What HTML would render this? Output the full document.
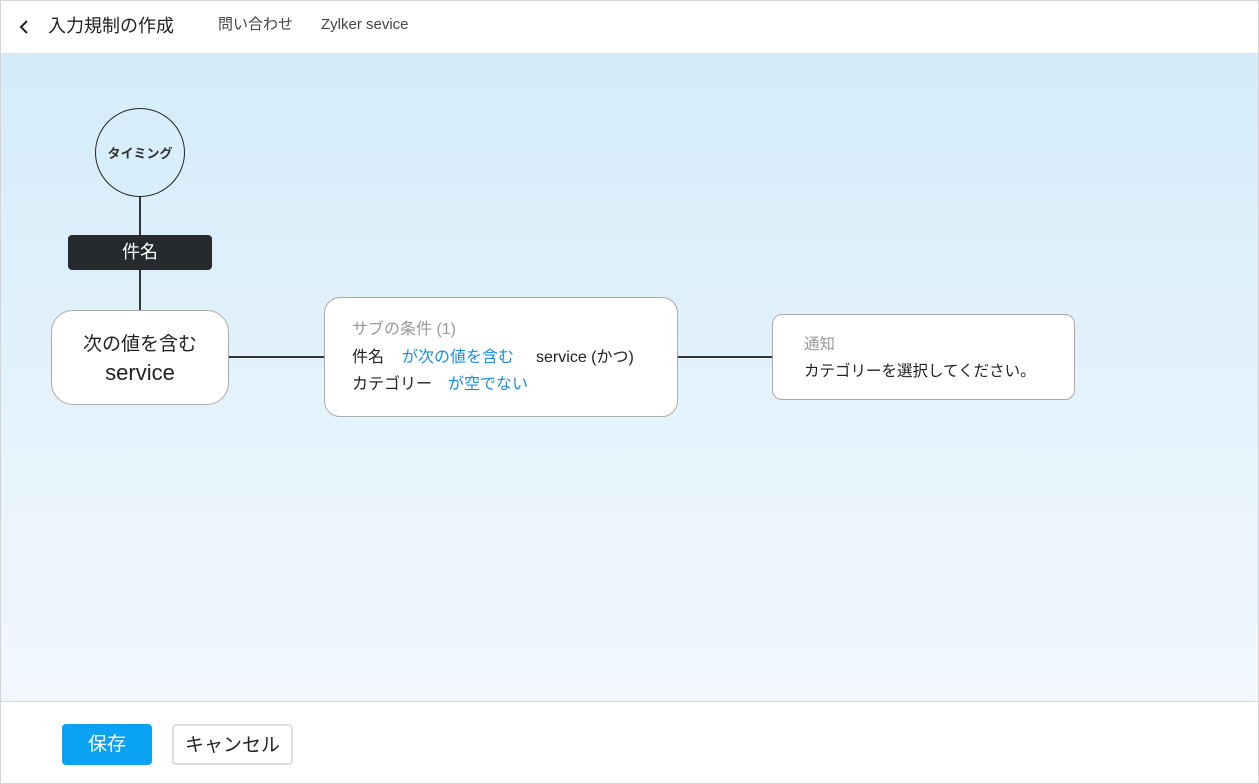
<!DOCTYPE html>
<html><head><meta charset="utf-8"><style>
*{box-sizing:border-box;margin:0;padding:0}
body{width:1259px;height:784px;position:relative;overflow:hidden;font-family:"Liberation Sans","Noto Sans CJK JP",sans-serif;background:#fff;color:#222}
.frame{position:absolute;left:0;top:0;width:1259px;height:784px;border:1px solid #d4d4d4}
.hdr{position:absolute;left:1px;top:1px;width:1257px;height:52px;background:#fff}
.canvas{position:absolute;left:1px;top:53px;width:1257px;height:648px;background:linear-gradient(#d4ecfa,#f2f8fd)}
.foot{position:absolute;left:1px;top:701px;width:1257px;height:82px;background:#fff;border-top:1px solid #d8d8d8}
.abs{position:absolute}
.line{position:absolute;background:#333}
</style></head><body>
<div class="hdr">
<svg class="abs" style="left:17px;top:18px" width="12" height="16" viewBox="0 0 12 16"><path d="M9 2 L3 8 L9 14" fill="none" stroke="#222" stroke-width="2"/></svg>
<div class="abs" style="left:47px;top:12px;font-size:18px;line-height:26px;color:#222">入力規制の作成</div>
<div class="abs" style="left:217px;top:13px;font-size:15px;line-height:22px;color:#444">問い合わせ</div>
<div class="abs" style="left:320px;top:13px;font-size:15px;line-height:22px;height:22px;color:#444;display:flex;align-items:center">Zylker sevice</div>
</div>
<div class="canvas"></div>
<div class="line" style="left:139px;top:196px;width:1.5px;height:40px"></div>
<div class="line" style="left:139px;top:269px;width:1.5px;height:42px"></div>
<div class="line" style="left:228px;top:356px;width:96px;height:1.5px"></div>
<div class="line" style="left:677px;top:356px;width:95px;height:1.5px"></div>
<div class="abs" style="left:95px;top:108px;width:90px;height:89px;border:1.5px solid #222;border-radius:50%;background:#d9eefb;display:flex;align-items:center;justify-content:center;font-size:13px;font-weight:bold;color:#333">タイミング</div>
<div class="abs" style="left:68px;top:235px;width:144px;height:35px;background:#26292d;border-radius:4px;color:#fff;font-size:18px;text-align:center;line-height:34px">件名</div>
<div class="abs" style="left:51px;top:310px;width:178px;height:95px;background:#fff;border:1px solid #aaa;border-radius:22px;text-align:center;font-size:19px;line-height:28px;padding-top:20px;color:#222">次の値を含む<br><span style="font-size:22px">service</span></div>
<div class="abs" style="left:324px;top:297px;width:354px;height:120px;background:#fff;border:1px solid #aaa;border-radius:16px;padding:18px 0 0 27px;font-size:16px;line-height:27.5px;color:#222">
<div style="color:#9a9a9a">サブの条件 (1)</div>
<div>件名<span style="color:#1a8fe0;margin-left:18px">が次の値を含む</span><span style="margin-left:22px">service (かつ)</span></div>
<div>カテゴリー<span style="color:#1a8fe0;margin-left:16px">が空でない</span></div>
</div>
<div class="abs" style="left:772px;top:314px;width:303px;height:86px;background:#fff;border:1px solid #aaa;border-radius:10px;padding:16px 0 0 31px;font-size:15.5px;line-height:27px;color:#222">
<div style="color:#9a9a9a">通知</div>
<div>カテゴリーを選択してください。</div>
</div>
<div class="foot">
<div class="abs" style="left:61px;top:22px;width:90px;height:41px;background:#0aa2f2;border-radius:4px;color:#fff;font-size:19px;text-align:center;line-height:41px">保存</div>
<div class="abs" style="left:171px;top:22px;width:121px;height:41px;background:#fff;border:2px solid #ddd;border-radius:4px;color:#222;font-size:19px;text-align:center;line-height:38px;padding-top:1px">キャンセル</div>
</div>
<div class="frame"></div>
</body></html>
